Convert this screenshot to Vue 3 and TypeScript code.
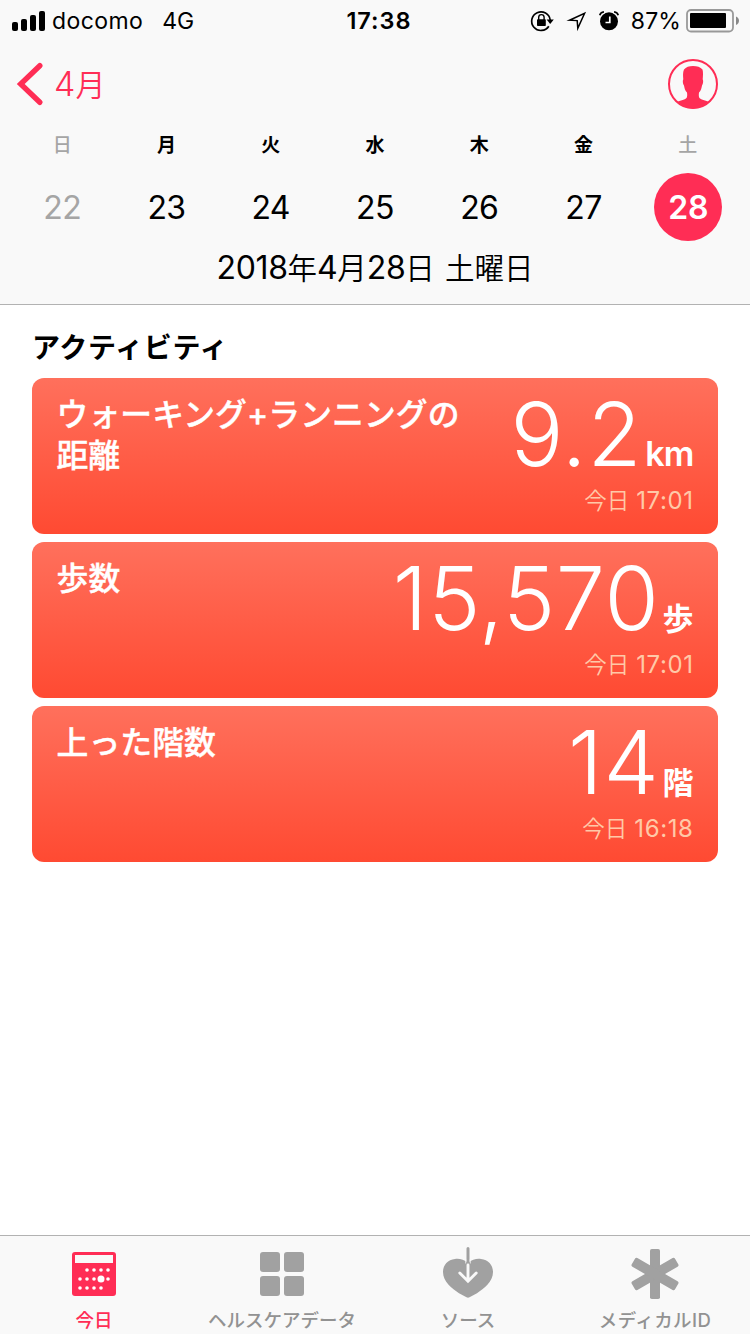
<script setup lang="ts">
interface Day { label: string; date: number; weekend?: boolean; selected?: boolean }
interface Card { title: string[]; value: string; unit: string; latin?: boolean; time: string }

const days: Day[] = [
  { label: '日', date: 22, weekend: true },
  { label: '月', date: 23 },
  { label: '火', date: 24 },
  { label: '水', date: 25 },
  { label: '木', date: 26 },
  { label: '金', date: 27 },
  { label: '土', date: 28, weekend: true, selected: true },
]

const cards: Card[] = [
  { title: ['ウォーキング+ランニングの', '距離'], value: '9.2', unit: 'km', latin: true, time: '17:01' },
  { title: ['歩数'], value: '15,570', unit: '歩', time: '17:01' },
  { title: ['上った階数'], value: '14', unit: '階', time: '16:18' },
]

const dots: [number, number][] = [
  [15, 18], [22, 18], [29, 18], [36, 18],
  [8, 27], [15, 27], [22, 27], [36, 27],
  [8, 36], [15, 36], [22, 36], [29, 36],
]
</script>

<template>
  <main class="screen">
    <header class="header">
      <div class="status">
        <div class="status-left">
          <svg class="signal" width="34" height="20" viewBox="0 0 34 20">
            <rect x="0" y="11" width="6" height="9" rx="2" />
            <rect x="9" y="8" width="6" height="12" rx="2" />
            <rect x="18" y="4" width="6" height="16" rx="2" />
            <rect x="27" y="0" width="6" height="20" rx="2" />
          </svg>
          <span class="carrier">docomo</span>
          <span class="network">4G</span>
        </div>
        <span class="clock">17:38</span>
        <div class="status-right">
          <svg class="lock" width="24" height="22" viewBox="0 0 24 22">
            <path d="M18.8 16.200A9.300 9.300 0 1 1 20.200 10" fill="none" stroke="#000" stroke-width="1.700" />
            <path d="M16.600 9.400h7.200l-3.600 4.600z" />
            <rect x="7" y="9.300" width="8.800" height="6.700" rx=".8" />
            <path d="M8.700 10V7.300a2.700 2.700 0 0 1 5.400 0V10" fill="none" stroke="#000" stroke-width="1.400" />
          </svg>
          <svg class="arrow" width="20" height="20" viewBox="0 0 20 20">
            <path d="M3.500 9.200 18.600 2.300 11.800 17.300 11.200 9.600z" fill="none" stroke="#000" stroke-width="1.500" stroke-miterlimit="10" />
          </svg>
          <svg class="alarm" width="20" height="20" viewBox="0 0 20 20">
            <circle cx="10" cy="10.300" r="9" />
            <path d="M1.200 4.300C1.600 2.700 3.200 1.200 5.200.8M18.800 4.300C18.400 2.700 16.800 1.200 14.800.8" fill="none" stroke="#f9f9f9" stroke-width="3.400" />
            <path d="M.8 4.300C1.200 2.500 2.800 1 4.900.8M19.200 4.300C18.800 2.500 17.200 1 15.100.8" fill="none" stroke="#000" stroke-width="1.700" />
            <path d="M10.800 5.500v6H6.500" fill="none" stroke="#fff" stroke-width="1.700" />
          </svg>
          <span class="percent">87%</span>
          <svg class="battery" width="54" height="24" viewBox="0 0 54 24">
            <rect x="1" y="1" width="46" height="21.500" rx="4" fill="none" stroke="#999" stroke-width="1.800" />
            <rect x="4" y="4" width="36" height="15" rx="1" />
            <path d="M50 7.500c4 1.500 4 7 0 8.500z" fill="#888" />
          </svg>
        </div>
      </div>

      <nav class="nav">
        <div class="back">
          <svg width="26" height="42" viewBox="0 0 26 42">
            <path d="M21.800 2.700 2.700 21l19.100 18.300" fill="none" stroke="#ff2d55" stroke-width="5.400" stroke-linecap="round" />
          </svg>
          <span class="back-text"><span class="back-num">4</span>月</span>
        </div>
        <svg class="profile" width="50" height="50" viewBox="0 0 50 50">
          <circle cx="25" cy="25" r="24" fill="none" stroke="#ff2d55" stroke-width="2" />
          <path d="M25 7C29 7 32.500 8 34.500 10.500C35.300 13 35 17 34.700 20.500C35.500 21 35.200 25 34 26.500C33.600 29 33 31.500 31 33.500C30.700 36 30.500 38.500 32 39.500C34 41.200 38 41.500 41 43Q34 49.500 25 49.500T9 43C12 41.500 16 41.200 18 39.500C19.500 38.500 19.300 36 19 33.500C17 31.500 16.400 29 16 26.500C14.800 25 14.500 21 15.300 20.500C15 17 14.700 13 16 10.500C18 8 21 7 25 7z" fill="#ff2d55" />
        </svg>
      </nav>

      <div class="week">
        <div v-for="d in days" :key="d.date" class="day" :class="{ weekend: d.weekend, selected: d.selected }">
          <span class="day-label">{{ d.label }}</span>
          <span class="day-num">{{ d.date }}</span>
        </div>
      </div>
      <div class="full-date"><span class="num">2018</span>年<span class="num">4</span>月<span class="num">28</span>日<i class="gap"></i>土曜日</div>
    </header>

    <section class="content">
      <h1 class="heading">アクティビティ</h1>
      <article v-for="c in cards" :key="c.unit" class="card">
        <h2 class="title"><span v-for="t in c.title" :key="t">{{ t }}</span></h2>
        <div class="reading">
          <div class="amount">
            <span class="value">{{ c.value }}</span>
            <span class="unit" :class="{ latin: c.latin }">{{ c.unit }}</span>
          </div>
          <div class="time"><span class="today">今日</span><span>{{ c.time }}</span></div>
        </div>
      </article>
    </section>

    <footer class="tabs">
      <div class="tab active">
        <svg width="44" height="50" viewBox="0 -4 44 50">
          <rect width="44" height="44" rx="3" />
          <rect x="3" y="3" width="38" height="8" fill="#f9f9f9" />
          <circle v-for="(p, i) in dots" :key="i" :cx="p[0]" :cy="p[1]" r="1.800" fill="#fff" />
          <circle cx="29" cy="27" r="3.500" fill="#fff" />
        </svg>
        <span>今日</span>
      </div>
      <div class="tab">
        <svg width="44" height="50" viewBox="0 -4 44 50">
          <rect width="20" height="20" rx="3" />
          <rect x="24" width="20" height="20" rx="3" />
          <rect y="24" width="20" height="20" rx="3" />
          <rect x="24" y="24" width="20" height="20" rx="3" />
        </svg>
        <span>ヘルスケアデータ</span>
      </div>
      <div class="tab">
        <svg width="50" height="50" viewBox="0 0 50 50">
          <path d="M25 15C21 11 15.500 10.500 12 11C5 11.500 0 17 0 24C0 33.500 9 40.500 16 45.200L23.500 49.300Q25 50 26.500 49.300L34 45.200C41 40.500 50 33.500 50 24C50 17 45 11.500 38 11C34.500 10.500 29 11 25 15z" />
          <path d="M23.500 15V.5a1.500 1.500 0 0 1 3 0V15z" />
          <path d="M22.700 11v4.500M27.300 11v4.500" stroke="#f9f9f9" stroke-width=".8" />
          <path d="M25 17v15M16.800 25l8.200 8.200 8.200-8.200" fill="none" stroke="#f9f9f9" stroke-width="2.900" stroke-linecap="round" />
        </svg>
        <span>ソース</span>
      </div>
      <div class="tab">
        <svg class="star" width="50" height="50" viewBox="0 0 50 50">
          <rect x="20" y="0" width="10" height="50" rx="1.800" />
          <rect x="20" y="0" width="10" height="50" rx="1.800" transform="rotate(60 25 25)" />
          <rect x="20" y="0" width="10" height="50" rx="1.800" transform="rotate(-60 25 25)" />
        </svg>
        <span class="medical">メディカル<b class="id">ID</b></span>
      </div>
    </footer>
  </main>
</template>

<style>
body { margin: 0; background: #fff; }
</style>

<style scoped>
* { box-sizing: border-box; }
.screen {
  width: 750px; height: 1334px; display: flex; flex-direction: column;
  background: #fff; color: #000; overflow: hidden;
  font-family: Inter, "Noto Sans CJK JP", sans-serif;
}
svg { display: block; flex: none; overflow: visible; }
.header { height: 305px; background: #f9f9f9; border-bottom: 1px solid #b2b2b2; }
.status {
  height: 40px; padding: 0 12px; display: grid; grid-template-columns: 1fr auto 1fr;
  align-items: center; font-size: 23px; line-height: 40px; white-space: nowrap;
}
.status-left, .status-right { display: flex; align-items: center; }
.status span { padding-top: 1px; }
.carrier { margin-left: 6px; letter-spacing: .4px; }
.network { margin-left: 19px; }
.clock { font-weight: 600; letter-spacing: 1px; font-size: 23.500px; margin-left: 8px; }
.status-right { justify-content: flex-end; }
.arrow { margin-left: 12px; }
.alarm { margin-left: 13px; }
.percent { margin-left: 12px; letter-spacing: .1px; }
.battery { margin: 0 -2px 0 5px; }
.nav { height: 88px; padding: 0 32px 0 18px; display: flex; align-items: center; justify-content: space-between; color: #ff2d55; }
.back { display: flex; align-items: center; }
.back-text { margin-left: 10px; font-size: 30px; font-weight: 350; line-height: 40px; padding-top: 1px; }
.back-num { font-size: 34px; font-weight: 350; }
.week { display: grid; grid-template-columns: repeat(7, 1fr); padding: 0 10px; }
.day { display: flex; flex-direction: column; align-items: center; }
.day-label { height: 45px; line-height: 36px; font-size: 19px; font-weight: 700; }
.weekend { color: #a5a5a5; }
.weekend .day-label { font-weight: 500; }
.day-num { width: 68px; height: 68px; line-height: 70px; text-align: center; font-size: 32px; letter-spacing: -.6px; border-radius: 50%; }
.selected .day-num { background: #ff2d55; color: #fff; font-weight: 600; letter-spacing: 0; padding-left: 1px; }
.full-date { height: 52px; line-height: 54px; font-size: 29.500px; font-weight: 350; display: flex; justify-content: center; }
.num { font-size: 32px; font-weight: 400; letter-spacing: -.4px; }
.gap { width: 10px; }
.content { flex: 1; padding: 0 32px; }
.heading { margin: 0; height: 73px; padding-top: 23px; font-size: 28px; letter-spacing: .7px; line-height: 40px; font-weight: 700; }
.card {
  height: 156px; margin-bottom: 8px; padding: 0 24.500px; border-radius: 12px;
  display: flex; justify-content: space-between; color: #fff;
  background: linear-gradient(#ff705c, #ff4a32);
}
.title { margin: 16px 0 0; font-size: 31.800px; line-height: 41px; font-weight: 500; -webkit-text-stroke: .4px #fff; letter-spacing: 0; display: flex; flex-direction: column; }
.title span:first-child { letter-spacing: .1px; }
.reading { display: flex; flex-direction: column; align-items: flex-end; }
.amount { height: 106px; display: flex; align-items: baseline; }
.value { font-size: 88px; line-height: 112px; font-weight: 300; letter-spacing: .7px; }
.unit { font-size: 31px; font-weight: 700; margin-left: 3px; line-height: 40px; }
.latin { font-size: 34px; font-weight: 600; margin-left: 3px; letter-spacing: -.8px; }
.time { display: flex; align-items: baseline; font-size: 24px; letter-spacing: .6px; line-height: 34px; color: #ffc9a8; }
.today { font-weight: 350; font-size: 22.500px; letter-spacing: 0; margin-right: 7px; }
.tabs { height: 99px; flex: none; background: #f9f9f9; border-top: 1px solid #b2b2b2; display: grid; grid-template-columns: 188px 188px 184px 190px; }
.tab { display: flex; flex-direction: column; align-items: center; padding-top: 12px; color: #929292; fill: #a1a1a1; font-size: 18.500px; font-weight: 500; }
.tab span { line-height: 28px; margin-top: 8px; white-space: nowrap; }
.tab .star { margin-top: 1px; }
.tab .medical { letter-spacing: .4px; margin-top: 7px; }
.id { font-weight: 500; }
.active { color: #ff2d55; fill: #ff2d55; }
</style>
